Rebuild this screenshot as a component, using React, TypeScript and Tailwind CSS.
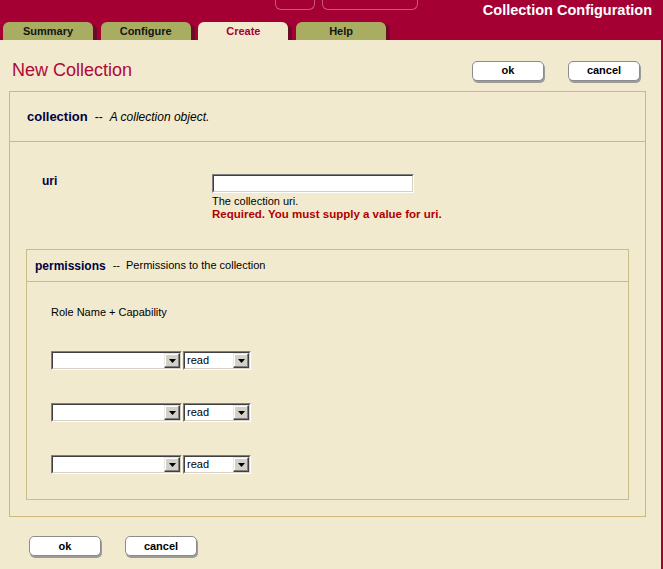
import type { ReactNode } from 'react';

const TABS = ['Summary', 'Configure', 'Create', 'Help'];
const ACTIVE_TAB = 'Create';

function PlainButton({ label }: { label: string }) {
  return (
    <button
      type="button"
      className="h-[20px] w-[72px] rounded-[5px] border border-[#8c8c8c] bg-white text-[11px] font-bold leading-none text-black shadow-[1px_2px_0_#9b9b9b]"
    >
      {label}
    </button>
  );
}

// classic sunken field: two-tone bevel
function Sunken({ className, children }: { className: string; children?: ReactNode }) {
  return (
    <div
      className={`h-[19px] border border-b-white border-l-[#808080] border-r-white border-t-[#808080] ${className}`}
    >
      <div className="flex h-full border border-b-[#d4d0c8] border-l-[#404040] border-r-[#d4d0c8] border-t-[#404040] bg-white">
        {children}
      </div>
    </div>
  );
}

function DropArrow() {
  return (
    <div className="ml-auto flex h-[15px] w-[16px] items-center justify-center border border-b-[#404040] border-l-[#e8e6e0] border-r-[#404040] border-t-[#e8e6e0] bg-[#d4d0c8] shadow-[inset_-1px_-1px_0_#808080,inset_1px_1px_0_#ffffff]">
      <svg width="7" height="4" viewBox="0 0 7 4">
        <path d="M0 0h7L3.5 4z" fill="#000" />
      </svg>
    </div>
  );
}

function PermissionRow() {
  return (
    <div className="flex gap-[1px]">
      <Sunken className="w-[131px]">
        <DropArrow />
      </Sunken>
      <Sunken className="w-[68px]">
        <span className="pl-[2px] text-[11px] leading-[15px] text-black">read</span>
        <DropArrow />
      </Sunken>
    </div>
  );
}

export default function App() {
  return (
    <div className="flex min-h-screen flex-col bg-[#a50034] font-['Liberation_Sans',Arial,sans-serif]">
      <header className="h-[40px]">
        <div className="flex h-[22px] items-start">
          <div className="ml-[275px] flex gap-[7px]">
            <div className="h-[10px] w-[40px] rounded-b-[6px] border border-t-0 border-[#c65a78]" />
            <div className="h-[10px] w-[96px] rounded-b-[6px] border border-t-0 border-[#c65a78]" />
          </div>
          <h2 className="ml-auto mr-[11px] pt-[2px] text-[14.5px] font-bold leading-[17px] text-white">
            Collection Configuration
          </h2>
        </div>
        <nav className="ml-[3px] flex gap-[7.7px]">
          {TABS.map((t) => (
            <div
              key={t}
              className={`h-[18px] w-[90px] rounded-t-[6px] text-center text-[11px] font-bold leading-[18px] shadow-[4px_2px_0_#6c0a27] ${
                t === ACTIVE_TAB ? 'bg-[#f2eace] text-[#a50034]' : 'bg-[#a8ad62] text-[#141414]'
              }`}
            >
              {t}
            </div>
          ))}
        </nav>
      </header>

      <main className="relative mr-[2px] flex-1 bg-[#f2eace]">
        <div className="flex items-center pb-[10px] pl-[12px] pr-[21px] pt-[20px]">
          <h1 className="text-[18px] leading-[21px] text-[#b0063a]">New Collection</h1>
          <div className="ml-auto flex gap-[24px]">
            <PlainButton label="ok" />
            <PlainButton label="cancel" />
          </div>
        </div>

        <section className="ml-[9px] mr-[15px] border border-[#cdb97c]">
          <div className="flex h-[50px] items-center border-b border-[#cdb97c] pl-[17px]">
            <span className="text-[13px] font-bold text-[#000040]">collection</span>
            <span className="ml-[7px] text-[12px] text-black">--</span>
            <span className="ml-[7px] text-[12px] italic text-black">A collection object.</span>
          </div>

          <div className="pt-[32px]">
            <div className="flex pl-[32px]">
              <span className="w-[170px] text-[12px] font-bold leading-[14px] text-[#000040]">uri</span>
              <div>
                <Sunken className="w-[202px]" />
                <p className="mt-[2px] text-[11px] leading-[13px] text-black">The collection uri.</p>
                <p className="text-[11.5px] font-bold leading-[13px] text-[#b00000]">
                  Required. You must supply a value for uri.
                </p>
              </div>
            </div>

            <div className="mx-[16px] mb-[16px] mt-[28px] border border-[#cbbd8b]">
              <div className="flex h-[32px] items-center border-b border-[#cbbd8b] pl-[8px]">
                <span className="text-[12px] font-bold text-[#000040]">permissions</span>
                <span className="ml-[7px] text-[11px] text-black">--</span>
                <span className="ml-[6px] text-[11px] text-black">Permissions to the collection</span>
              </div>
              <div className="pb-[25px] pl-[24px] pt-[24px]">
                <p className="text-[11px] leading-[13px] text-black">Role Name + Capability</p>
                <div className="mt-[32px] flex flex-col gap-[33px]">
                  <PermissionRow />
                  <PermissionRow />
                  <PermissionRow />
                </div>
              </div>
            </div>
          </div>
        </section>

        <div className="mt-[19px] flex gap-[24px] pl-[29px]">
          <PlainButton label="ok" />
          <PlainButton label="cancel" />
        </div>
      </main>
    </div>
  );
}
